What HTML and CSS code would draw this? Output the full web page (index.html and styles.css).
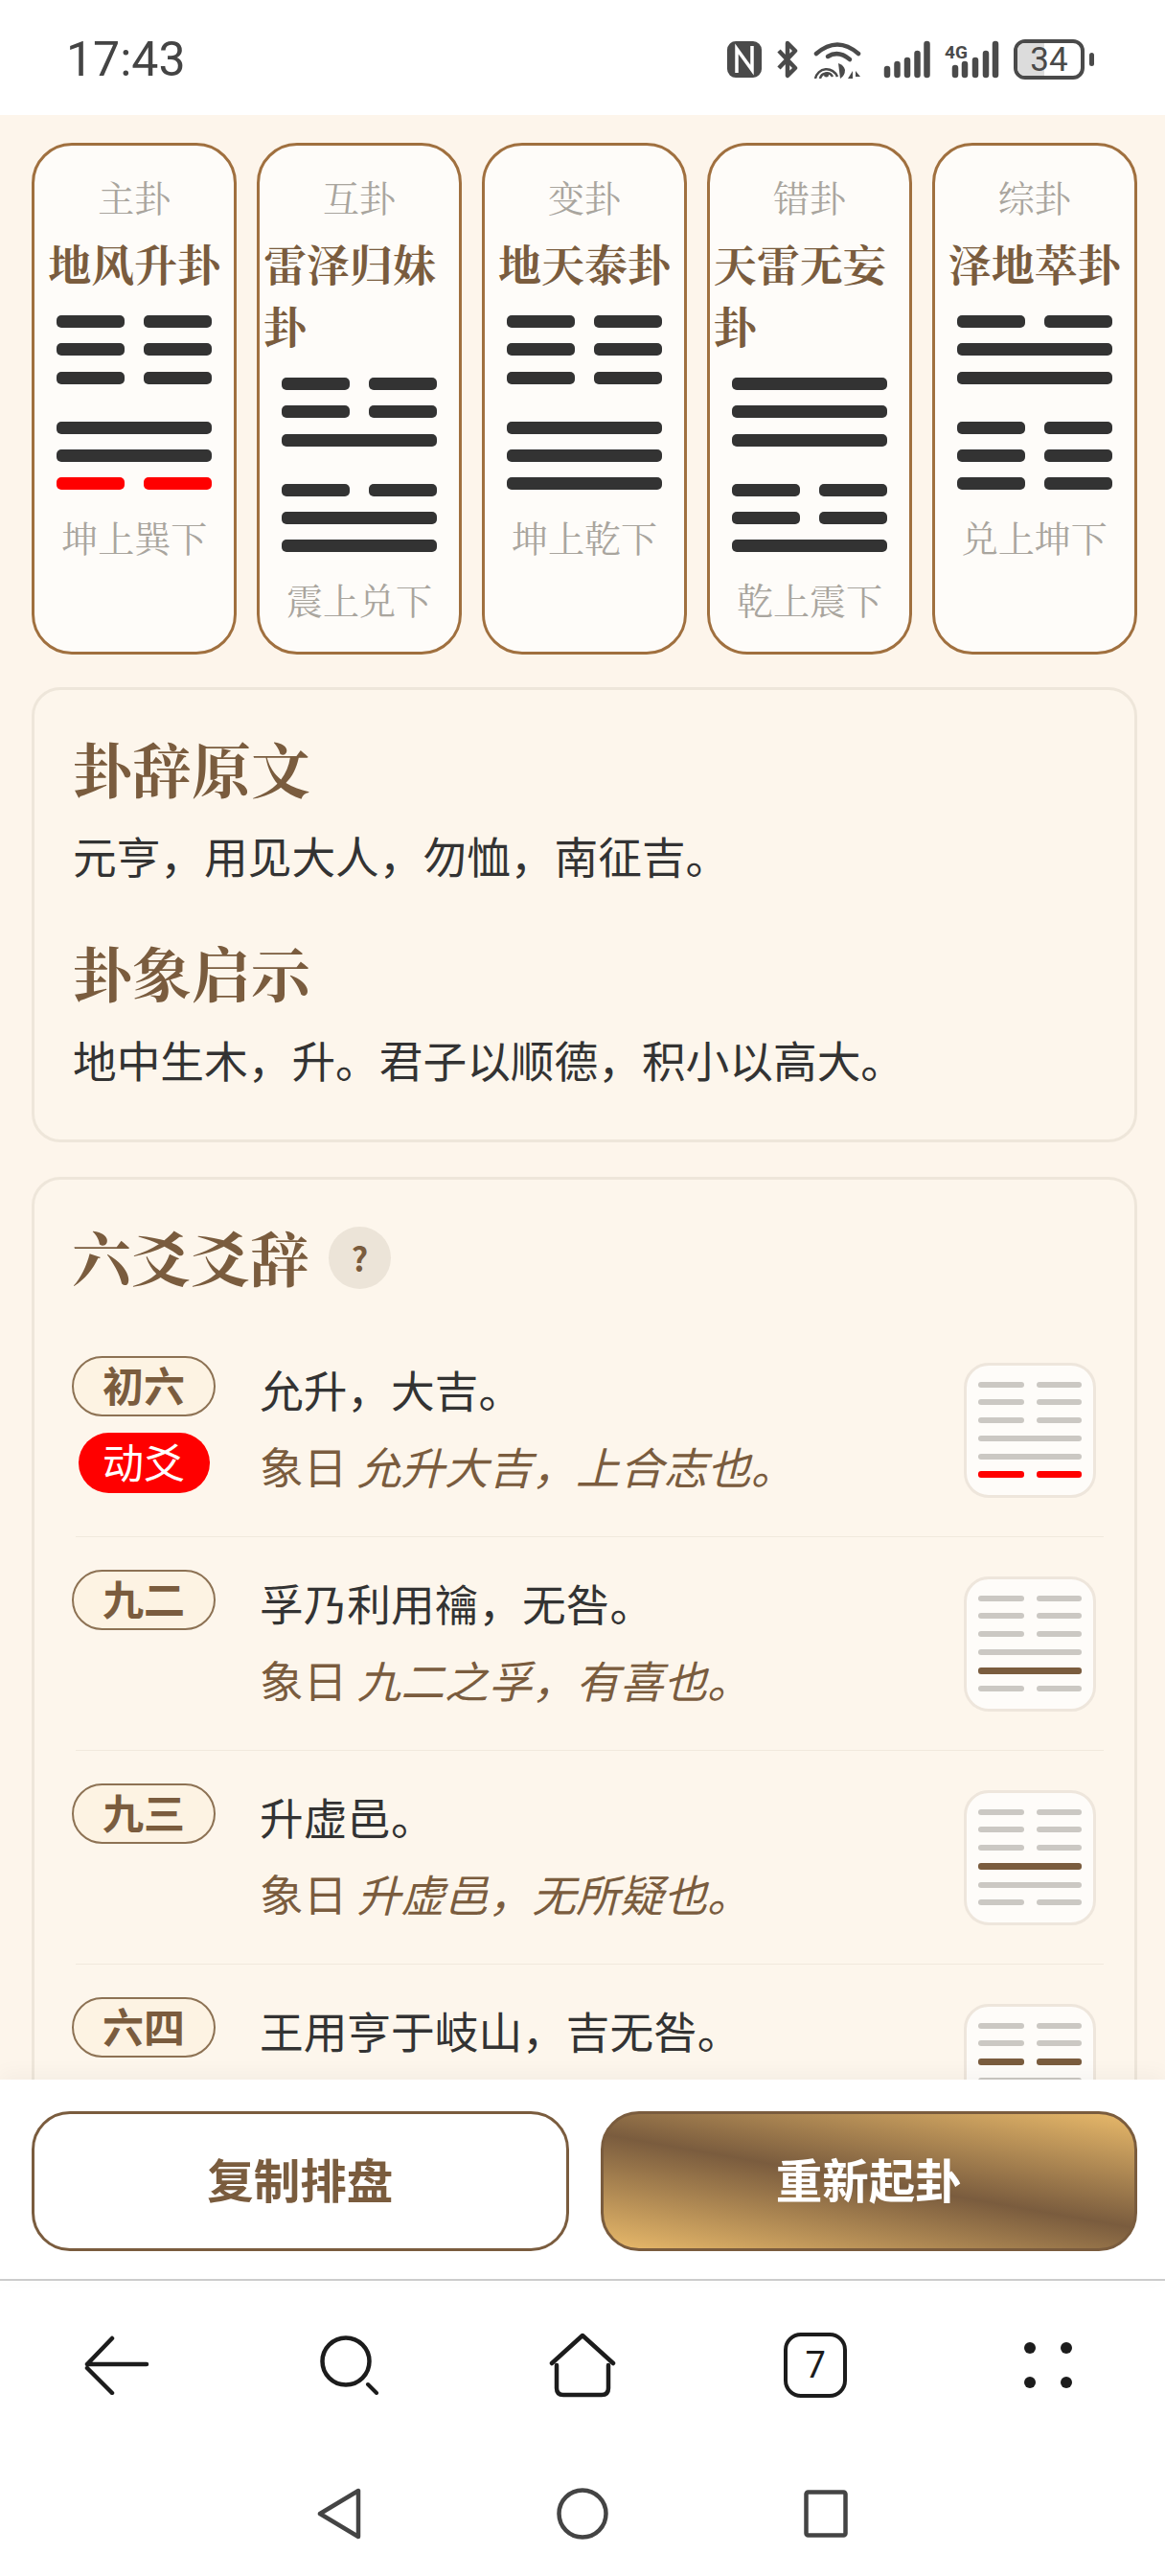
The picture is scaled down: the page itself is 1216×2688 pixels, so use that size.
FILE: index.html
```html
<!DOCTYPE html>
<html lang="zh-CN">
<head>
    <meta charset="UTF-8">
    <meta name="viewport" content="width=device-width, initial-scale=1.0">
    <title>六爻排盘</title>
    <link rel="stylesheet" href="styles.css">
</head>
<body>
    <div class="phone">
        <div class="status-bar">
            <span class="time">17:43</span>
            <div class="status-icons">
                <svg class="icon-nfc" width="36" height="38" viewBox="0 0 36 38">
                    <rect x="0" y="0" width="36" height="38" rx="9" fill="#4a4a4a"/>
                    <path d="M10 33V8L26 30V5" fill="none" stroke="#fff" stroke-width="3.5"/>
                </svg>
                <svg class="icon-bt" width="24" height="40" viewBox="0 0 24 40">
                    <path d="M3 11L20 29L12 37V3L20 11L3 29" fill="none" stroke="#4a4a4a" stroke-width="4.5" stroke-linejoin="round"/>
                </svg>
                <svg class="icon-wifi" width="50" height="40" viewBox="0 0 50 40">
                    <path d="M3 14Q25 -5 47 14" fill="none" stroke="#4a4a4a" stroke-width="4.5" stroke-linecap="round"/>
                    <path d="M15 17Q26 10 38 20" fill="none" stroke="#4a4a4a" stroke-width="4.5" stroke-linecap="round"/>
                    <path d="M2 40A12 12 0 0 1 25 38" fill="none" stroke="#4a4a4a" stroke-width="2.5"/>
                    <path d="M7 40A7 7 0 0 1 20 38" fill="none" stroke="#4a4a4a" stroke-width="2.5"/>
                    <circle cx="13.500" cy="36" r="2.500" fill="#4a4a4a"/>
                    <path d="M26 24Q32 26 33 31Q33 37 28 40Z" fill="#4a4a4a"/>
                    <path d="M36 40L41 32V40ZM44 32L49 38H44Z" fill="#4a4a4a"/>
                </svg>
                <svg class="icon-signal" width="49" height="40" viewBox="0 0 49 40">
                    <g stroke="#4a4a4a" stroke-width="6.500" stroke-linecap="round">
                        <path d="M4 30V36"/>
                        <path d="M14.500 25V36"/>
                        <path d="M25 21V36"/>
                        <path d="M35.500 14V36"/>
                        <path d="M45.500 4V36"/>
                    </g>
                </svg>
                <svg class="icon-signal-4g" width="57" height="40" viewBox="0 0 57 40">
                    <text class="net-type" x="0" y="19">4G</text>
                    <g stroke="#4a4a4a" stroke-width="6.500" stroke-linecap="round">
                        <path d="M11 29V36"/>
                        <path d="M21 25V36"/>
                        <path d="M32 21V36"/>
                        <path d="M43 14V36"/>
                        <path d="M53 4V36"/>
                    </g>
                </svg>
                <div class="battery">
                    <div class="battery-body">
                        <div class="battery-fill"></div>
                        <span class="battery-num">34</span>
                    </div>
                    <div class="battery-nub"></div>
                </div>
            </div>
        </div>

        <div class="content">
            <div class="hex-cards">
                <div class="hex-card">
                    <div class="hex-label">主卦</div>
                    <div class="hex-name">地风升卦</div>
                    <div class="hex">
                        <div class="trigram">
                            <div class="yao"><i></i><i></i></div>
                            <div class="yao"><i></i><i></i></div>
                            <div class="yao"><i></i><i></i></div>
                        </div>
                        <div class="trigram">
                            <div class="yao"><i></i></div>
                            <div class="yao"><i></i></div>
                            <div class="yao moving"><i></i><i></i></div>
                        </div>
                    </div>
                    <div class="hex-label hex-foot">坤上巽下</div>
                </div>
                <div class="hex-card">
                    <div class="hex-label">互卦</div>
                    <div class="hex-name">雷泽归妹卦</div>
                    <div class="hex">
                        <div class="trigram">
                            <div class="yao"><i></i><i></i></div>
                            <div class="yao"><i></i><i></i></div>
                            <div class="yao"><i></i></div>
                        </div>
                        <div class="trigram">
                            <div class="yao"><i></i><i></i></div>
                            <div class="yao"><i></i></div>
                            <div class="yao"><i></i></div>
                        </div>
                    </div>
                    <div class="hex-label hex-foot">震上兑下</div>
                </div>
                <div class="hex-card">
                    <div class="hex-label">变卦</div>
                    <div class="hex-name">地天泰卦</div>
                    <div class="hex">
                        <div class="trigram">
                            <div class="yao"><i></i><i></i></div>
                            <div class="yao"><i></i><i></i></div>
                            <div class="yao"><i></i><i></i></div>
                        </div>
                        <div class="trigram">
                            <div class="yao"><i></i></div>
                            <div class="yao"><i></i></div>
                            <div class="yao"><i></i></div>
                        </div>
                    </div>
                    <div class="hex-label hex-foot">坤上乾下</div>
                </div>
                <div class="hex-card">
                    <div class="hex-label">错卦</div>
                    <div class="hex-name">天雷无妄卦</div>
                    <div class="hex">
                        <div class="trigram">
                            <div class="yao"><i></i></div>
                            <div class="yao"><i></i></div>
                            <div class="yao"><i></i></div>
                        </div>
                        <div class="trigram">
                            <div class="yao"><i></i><i></i></div>
                            <div class="yao"><i></i><i></i></div>
                            <div class="yao"><i></i></div>
                        </div>
                    </div>
                    <div class="hex-label hex-foot">乾上震下</div>
                </div>
                <div class="hex-card">
                    <div class="hex-label">综卦</div>
                    <div class="hex-name">泽地萃卦</div>
                    <div class="hex">
                        <div class="trigram">
                            <div class="yao"><i></i><i></i></div>
                            <div class="yao"><i></i></div>
                            <div class="yao"><i></i></div>
                        </div>
                        <div class="trigram">
                            <div class="yao"><i></i><i></i></div>
                            <div class="yao"><i></i><i></i></div>
                            <div class="yao"><i></i><i></i></div>
                        </div>
                    </div>
                    <div class="hex-label hex-foot">兑上坤下</div>
                </div>
            </div>

            <div class="panel panel-text">
                <h2 class="panel-title">卦辞原文</h2>
                <p class="panel-body">元亨，用见大人，勿恤，南征吉。</p>
                <h2 class="panel-title second">卦象启示</h2>
                <p class="panel-body">地中生木，升。君子以顺德，积小以高大。</p>
            </div>

            <div class="panel panel-lines">
                <div class="lines-head">
                    <h2 class="panel-title">六爻爻辞</h2>
                    <span class="help">?</span>
                </div>

                <div class="line-row">
                    <div class="line-tags">
                        <span class="tag">初六</span>
                        <span class="tag tag-moving">动爻</span>
                    </div>
                    <div class="line-text">
                        <div class="line-main">允升，大吉。</div>
                        <div class="line-note">象日 <em>允升大吉，上合志也。</em></div>
                    </div>
                    <div class="mini-hex">
                        <div class="yao"><i></i><i></i></div>
                        <div class="yao"><i></i><i></i></div>
                        <div class="yao"><i></i><i></i></div>
                        <div class="yao"><i></i></div>
                        <div class="yao"><i></i></div>
                        <div class="yao moving"><i></i><i></i></div>
                    </div>
                </div>

                <div class="line-row">
                    <div class="line-tags">
                        <span class="tag">九二</span>
                    </div>
                    <div class="line-text">
                        <div class="line-main">孚乃利用禴，无咎。</div>
                        <div class="line-note">象日 <em>九二之孚，有喜也。</em></div>
                    </div>
                    <div class="mini-hex">
                        <div class="yao"><i></i><i></i></div>
                        <div class="yao"><i></i><i></i></div>
                        <div class="yao"><i></i><i></i></div>
                        <div class="yao"><i></i></div>
                        <div class="yao current"><i></i></div>
                        <div class="yao"><i></i><i></i></div>
                    </div>
                </div>

                <div class="line-row">
                    <div class="line-tags">
                        <span class="tag">九三</span>
                    </div>
                    <div class="line-text">
                        <div class="line-main">升虚邑。</div>
                        <div class="line-note">象日 <em>升虚邑，无所疑也。</em></div>
                    </div>
                    <div class="mini-hex">
                        <div class="yao"><i></i><i></i></div>
                        <div class="yao"><i></i><i></i></div>
                        <div class="yao"><i></i><i></i></div>
                        <div class="yao current"><i></i></div>
                        <div class="yao"><i></i></div>
                        <div class="yao"><i></i><i></i></div>
                    </div>
                </div>

                <div class="line-row">
                    <div class="line-tags">
                        <span class="tag">六四</span>
                    </div>
                    <div class="line-text">
                        <div class="line-main">王用亨于岐山，吉无咎。</div>
                    </div>
                    <div class="mini-hex">
                        <div class="yao"><i></i><i></i></div>
                        <div class="yao"><i></i><i></i></div>
                        <div class="yao current"><i></i><i></i></div>
                        <div class="yao"><i></i></div>
                        <div class="yao"><i></i></div>
                        <div class="yao"><i></i><i></i></div>
                    </div>
                </div>
            </div>
        </div>

        <div class="actions">
            <button class="btn btn-copy">复制排盘</button>
            <button class="btn btn-again">重新起卦</button>
        </div>

        <div class="browser-bar">
            <svg width="68" height="62" viewBox="0 0 68 62">
                <path d="M29 3L3 30M3 30H65M3 34L29 60" fill="none" stroke="#1c1c1c" stroke-width="4.500" stroke-linecap="round" stroke-linejoin="round"/>
            </svg>
            <svg width="62" height="62" viewBox="0 0 62 62">
                <circle cx="27" cy="27" r="24.500" fill="none" stroke="#1c1c1c" stroke-width="4.500"/>
                <path d="M50 51L59 60" fill="none" stroke="#1c1c1c" stroke-width="4" stroke-linecap="round"/>
            </svg>
            <svg width="70" height="68" viewBox="0 0 70 68">
                <path d="M3 32L35 3L67 32M8 34V58Q8 65 15 65H55Q62 65 62 58V34" fill="none" stroke="#1c1c1c" stroke-width="4.500" stroke-linecap="round" stroke-linejoin="round"/>
            </svg>
            <div class="tabs-count">7</div>
            <svg width="50" height="48" viewBox="0 0 50 48">
                <circle cx="6" cy="6" r="6" fill="#1c1c1c"/>
                <circle cx="44" cy="6" r="6" fill="#1c1c1c"/>
                <circle cx="6" cy="42" r="6" fill="#1c1c1c"/>
                <circle cx="44" cy="42" r="6" fill="#1c1c1c"/>
            </svg>
        </div>

        <div class="system-bar">
            <svg width="46" height="54" viewBox="0 0 46 54">
                <path d="M43 3V51L3 27Z" fill="none" stroke="#444" stroke-width="4.500" stroke-linejoin="round"/>
            </svg>
            <svg width="54" height="54" viewBox="0 0 54 54">
                <circle cx="27" cy="27" r="24.500" fill="none" stroke="#444" stroke-width="4.500"/>
            </svg>
            <svg width="46" height="50" viewBox="0 0 46 50">
                <rect x="2.500" y="2.500" width="41" height="45" rx="2" fill="none" stroke="#444" stroke-width="4.500"/>
            </svg>
        </div>
    </div>
</body>
</html>
```

FILE: styles.css
```css
* {
    box-sizing: border-box;
}
body {
    margin: 0;
    font-family: "Noto Sans CJK SC", sans-serif;
    background-color: #fff;
    color: #333;
}
.phone {
    display: flex;
    flex-direction: column;
    width: 1216px;
    height: 2688px;
    overflow: hidden;
}

/* status bar */
.status-bar {
    flex: none;
    display: flex;
    justify-content: space-between;
    align-items: center;
    height: 120px;
    padding: 4px 74px 0 69px;
    background: #fff;
}
.time {
    font-family: Roboto, sans-serif;
    font-size: 50px;
    color: #444;
}
.status-icons {
    display: flex;
    align-items: center;
    gap: 15px;
}
.icon-wifi {
    margin-right: 8px;
}
.net-type {
    font-family: Roboto, sans-serif;
    font-size: 19px;
    font-weight: 700;
    fill: #4a4a4a;
}
.battery {
    display: flex;
    align-items: center;
    gap: 5px;
}
.battery-body {
    position: relative;
    display: flex;
    justify-content: center;
    align-items: center;
    width: 74px;
    height: 42px;
    border: 4px solid #4a4a4a;
    border-radius: 12px;
    overflow: hidden;
}
.battery-fill {
    position: absolute;
    left: 0;
    top: 0;
    bottom: 0;
    width: 42%;
    background: #dcdcdc;
}
.battery-num {
    position: relative;
    font-family: Roboto, sans-serif;
    font-size: 35px;
    line-height: 1;
    color: #4a4a4a;
}
.battery-nub {
    width: 5px;
    height: 14px;
    border-radius: 3px;
    background: #4a4a4a;
}

/* main scrolling part */
.content {
    flex: 1;
    min-height: 0;
    overflow: hidden;
    padding: 29px 29px 0 33px;
    background: #fdf5eb;
}
.hex-cards {
    display: flex;
    gap: 20.500px;
    margin-bottom: 34px;
}
.hex-card {
    flex: 1 1 0;
    min-width: 0;
    display: flex;
    flex-direction: column;
    align-items: center;
    height: 534px;
    padding: 26px 4px 0;
    background: #fefcf9;
    border: 3px solid #a0703f;
    border-radius: 42px;
}
.hex-label {
    font-family: "Noto Serif CJK SC", "Noto Sans CJK SC", serif;
    font-size: 38px;
    line-height: 54px;
    margin-bottom: 10px;
    color: #a9a59e;
}
.hex-foot {
    margin: 22px 0 0;
}
.hex-name {
    font-family: "Noto Serif CJK SC", "Noto Sans CJK SC", serif;
    font-size: 45px;
    line-height: 65px;
    font-weight: 700;
    color: #7a5c3e;
}
.hex {
    display: flex;
    flex-direction: column;
    gap: 39px;
    width: 162px;
    margin-top: 22px;
}
.trigram {
    display: flex;
    flex-direction: column;
    gap: 16.300px;
}
.yao {
    display: flex;
    gap: 20px;
    height: 13px;
}
.yao i {
    flex: 1;
    border-radius: 5px;
    background: #333;
}
.yao.moving i {
    background: #f00;
}

/* panels */
.panel {
    background: #fdf6ec;
    border: 3px solid #eee6da;
    border-radius: 30px;
}
.panel-text {
    height: 475px;
    margin-bottom: 36px;
    padding: 42px 40px 0;
}
.panel-title {
    margin: 0;
    font-family: "Noto Serif CJK SC", "Noto Sans CJK SC", serif;
    font-size: 62px;
    line-height: 80px;
    font-weight: 700;
    color: #7a5c3e;
}
.panel-title.second {
    margin-top: 52px;
}
.panel-body {
    margin: 19px 0 0;
    font-size: 45.700px;
    line-height: 62px;
    color: #333;
}
.panel-lines {
    padding: 41px 32px 0 43px;
}
.lines-head {
    display: flex;
    align-items: center;
    gap: 20px;
    margin: 0 0 29px -4px;
}
.help {
    display: flex;
    justify-content: center;
    align-items: center;
    width: 65px;
    height: 65px;
    border-radius: 50%;
    background: #ece4d8;
    font-size: 34px;
    font-weight: 700;
    color: #7a5c3e;
}
.line-row {
    display: flex;
    align-items: flex-start;
    height: 223px;
    padding: 34px 8px 34px 0;
    border-bottom: 1px solid #f1e9dd;
}
.line-tags {
    flex: none;
    display: flex;
    flex-direction: column;
    align-items: center;
    gap: 17px;
    width: 150px;
    margin: 0 46px 0 -4px;
}
.tag {
    display: flex;
    justify-content: center;
    align-items: center;
    width: 150px;
    height: 63px;
    padding-bottom: 6px;
    border: 2px solid #8d7254;
    border-radius: 32px;
    background: #fdf3e3;
    font-size: 43px;
    font-weight: 700;
    color: #7a5c3e;
}
.tag-moving {
    width: 137px;
    border: 0;
    background: #f00;
    font-weight: 400;
    color: #fff;
}
.line-text {
    flex: 1;
    min-width: 0;
    padding-top: 3px;
}
.line-main {
    font-size: 45.700px;
    line-height: 62px;
    color: #333;
}
.line-note {
    margin-top: 18px;
    font-size: 45.700px;
    line-height: 62px;
    color: #7a5c3e;
}
.mini-hex {
    flex: none;
    align-self: center;
    display: flex;
    flex-direction: column;
    justify-content: space-between;
    width: 138px;
    height: 141px;
    padding: 17px 12px;
    background: #fefcf9;
    border: 3px solid #eee6dc;
    border-radius: 26px;
}
.mini-hex .yao {
    gap: 13px;
    height: 6px;
}
.mini-hex .yao i {
    border-radius: 3px;
    background: #cbc8c3;
}
.mini-hex .yao.moving,
.mini-hex .yao.current {
    height: 7px;
}
.mini-hex .yao.moving i {
    background: #f00;
}
.mini-hex .yao.current i {
    background: #7a5c3e;
}

/* bottom actions */
.actions {
    flex: none;
    position: relative;
    display: flex;
    gap: 33px;
    height: 210px;
    padding: 33px 29px 29px 33px;
    background: #fff;
    border-bottom: 2px solid #ccc;
    box-shadow: 0 -6px 20px rgba(0, 0, 0, 0.04);
}
.btn {
    flex: 1;
    height: 146px;
    padding: 0 0 6px;
    border: 3px solid #7a5c3e;
    border-radius: 40px;
    font-family: "Noto Sans CJK SC", sans-serif;
    font-size: 48.500px;
    font-weight: 700;
}
.btn-copy {
    background: #fff;
    color: #7a5c3e;
}
.btn-again {
    background: linear-gradient(10deg, #e8b96a, #7a5c3e 50%, #e8b96a);
    color: #fff;
}

/* browser toolbar and system nav */
.browser-bar {
    flex: none;
    display: grid;
    grid-template-columns: repeat(5, 1fr);
    justify-items: center;
    align-items: center;
    height: 175px;
    background: #fff;
}
.tabs-count {
    display: flex;
    justify-content: center;
    align-items: center;
    width: 66px;
    height: 68px;
    border: 4.500px solid #1c1c1c;
    border-radius: 18px;
    font-family: Roboto, sans-serif;
    font-size: 38px;
    color: #1c1c1c;
}
.system-bar {
    flex: none;
    display: flex;
    justify-content: center;
    align-items: center;
    gap: 204px;
    height: 133px;
    padding-top: 3px;
    background: #fff;
}
```
